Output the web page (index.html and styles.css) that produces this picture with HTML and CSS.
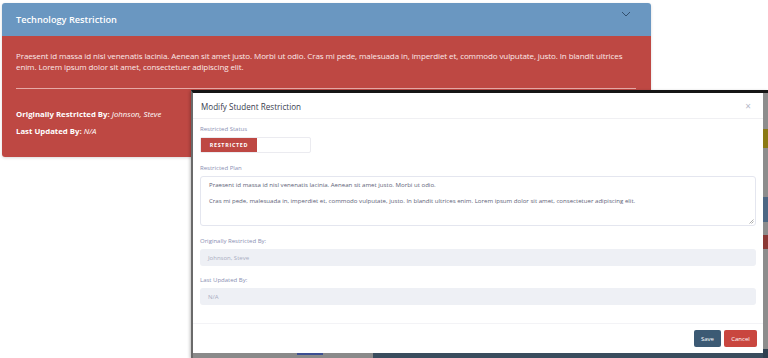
FILE: index.html
```html
<!DOCTYPE html>
<html lang="en">
<head>
<meta charset="UTF-8">
<meta name="viewport" content="width=device-width, initial-scale=1.0">
<title>Technology Restriction</title>
<link rel="stylesheet" href="styles.css">
</head>
<body>
<div class="card">
    <div class="card-header">
        <span>Technology Restriction</span>
        <svg class="chevron" width="10" height="6" viewBox="0 0 10 6"><path d="M1 1 L5 5 L9 1" fill="none" stroke="#33506e" stroke-width="1"/></svg>
    </div>
    <div class="card-body">
        <p class="plan">Praesent id massa id nisl venenatis lacinia. Aenean sit amet justo. Morbi ut odio. Cras mi pede, malesuada in, imperdiet et, commodo vulputate, justo. In blandit ultrices enim. Lorem ipsum dolor sit amet, consectetuer adipiscing elit.</p>
        <hr>
        <p class="meta"><b>Originally Restricted By:</b> <i>Johnson, Steve</i></p>
        <p class="meta"><b>Last Updated By:</b> <i>N/A</i></p>
    </div>
</div>

<!-- captura do modal por cima do cartão -->
<div class="shot">
    <div class="modal">
        <div class="modal-header">
            <span>Modify Student Restriction</span>
            <span class="close">&times;</span>
        </div>
        <div class="modal-body">
            <label>Restricted Status</label>
            <div class="toggle">
                <span class="on">RESTRICTED</span>
                <span class="off"></span>
            </div>
            <label>Restricted Plan</label>
            <div class="textarea">
                <p>Praesent id massa id nisl venenatis lacinia. Aenean sit amet justo. Morbi ut odio.</p>
                <p>Cras mi pede, malesuada in, imperdiet et, commodo vulputate, justo. In blandit ultrices enim. Lorem ipsum dolor sit amet, consectetuer adipiscing elit.</p>
                <svg class="grip" width="5" height="5" viewBox="0 0 5 5"><path d="M4.5 0.5 L0.5 4.5 M4.5 2.5 L2.5 4.5" stroke="#999" stroke-width="0.8"/></svg>
            </div>
            <label>Originally Restricted By:</label>
            <div class="input">Johnson, Steve</div>
            <label>Last Updated By:</label>
            <div class="input">N/A</div>
        </div>
        <div class="modal-footer">
            <button class="btn save">Save</button>
            <button class="btn cancel">Cancel</button>
        </div>
    </div>
    <div class="side">
        <div class="s-gray" style="height:36px"></div>
        <div class="s-olive" style="height:19px"></div>
        <div class="s-gray" style="height:49px"></div>
        <div class="s-blue" style="height:25px"></div>
        <div class="s-gray" style="height:13px"></div>
        <div class="s-red" style="height:14px"></div>
        <div class="s-gray" style="height:100px"></div>
        <div class="s-slate" style="height:10px"></div>
    </div>
    <div class="bottom">
        <div class="b-gray"><span class="b-blue"></span></div>
        <div class="b-slate"></div>
    </div>
</div>
</body>
</html>
```

FILE: styles.css
```css
body {
    font-family: "Open Sans", "Noto Sans", sans-serif;
    margin: 0;
    padding: 3px 0 0 2px;
    background-color: #fff;
    width: 768px;
    height: 358px;
    box-sizing: border-box;
    overflow: hidden;
    position: relative;
}

/* Cartão */
.card {
    width: 649px;
    border-radius: 3px;
    overflow: hidden;
    box-shadow: 0 1px 3px rgba(0, 0, 0, 0.15);
}

.card-header {
    height: 33px;
    background-color: #6a97c1;
    color: #fff;
    font-size: 9.2px;
    font-weight: 600;
    display: flex;
    align-items: center;
    justify-content: space-between;
    padding: 0 20px 0 14px;
    box-sizing: border-box;
}

.chevron {
    margin-top: -11px;
}

.card-body {
    background-color: #be4843;
    color: #fff;
    padding: 14px 15px 14px 14px;
    height: 121px;
    box-sizing: border-box;
}

.plan {
    margin: 0;
    font-size: 8px;
    letter-spacing: -0.1px;
    line-height: 11px;
    color: #fbe9e8;
}

.card-body hr {
    border: none;
    border-top: 1px solid #e7a9a6;
    margin: 16px 0 20px 0;
}

.meta {
    margin: 0 0 6px 0;
    font-size: 7.8px;
    line-height: 11px;
}

.meta b {
    font-weight: 700;
}

.meta i {
    font-weight: 400;
}

/* Captura do modal */
.shot {
    position: absolute;
    left: 191px;
    top: 90px;
    width: 577px;
    height: 268px;
    border-top: 3px solid #151515;
    border-left: 2px solid #6a6a6a;
    box-sizing: border-box;
    display: grid;
    grid-template-columns: 570px 5px;
    grid-template-rows: 260px 5px;
    background-color: #8a8a8a;
    box-shadow: -1px 1px 3px rgba(0, 0, 0, 0.25);
}

.modal {
    grid-column: 1;
    grid-row: 1;
    background-color: #fff;
    display: flex;
    flex-direction: column;
    font-size: 6.3px;
    overflow: hidden;
}

.modal-header {
    height: 26px;
    flex: none;
    border-bottom: 1px solid #f0f0f3;
    display: flex;
    align-items: center;
    justify-content: space-between;
    padding: 1px 12px 0 8px;
    color: #3a3d4f;
    font-size: 8.1px;
    box-sizing: border-box;
}

.close {
    color: #b5b8c8;
    font-size: 10px;
}

.modal-body {
    padding: 6px 7px 0 7px;
    flex: 1;
}

.modal-body label {
    display: block;
    color: #8a8fb3;
    font-size: 6px;
    line-height: 9px;
    margin-bottom: 3px;
}

.toggle {
    width: 111px;
    height: 16px;
    border: 1px solid #ebebf0;
    border-radius: 2px;
    display: flex;
    box-sizing: border-box;
    margin: 1px 0 11px 0;
}

.toggle .on {
    width: 56px;
    background-color: #be4843;
    color: #fff;
    font-weight: 700;
    font-size: 5.4px;
    letter-spacing: 0.7px;
    display: flex;
    align-items: center;
    justify-content: center;
}

.textarea {
    position: relative;
    height: 50px;
    border: 1px solid #e4e6ef;
    border-radius: 3px;
    padding: 4px 8px;
    box-sizing: border-box;
    color: #5e6278;
    font-size: 6.1px;
    line-height: 8px;
    margin-bottom: 11px;
}

.textarea p {
    margin: 0 0 8px 0;
}

.grip {
    position: absolute;
    right: 1px;
    bottom: 1px;
}

.input {
    height: 17px;
    background-color: #eef0f5;
    border-radius: 3px;
    color: #a9adc2;
    font-size: 6px;
    padding: 0 8px;
    display: flex;
    align-items: center;
    margin-bottom: 10px;
}

.modal-footer {
    height: 30px;
    flex: none;
    border-top: 1px solid #f3f3f6;
    display: flex;
    justify-content: flex-end;
    align-items: center;
    gap: 3px;
    padding: 0 6px 0 0;
    box-sizing: border-box;
}

.btn {
    height: 17px;
    border: none;
    border-radius: 2px;
    color: #fff;
    font-family: inherit;
    font-size: 6px;
    padding: 0;
    cursor: pointer;
}

.save {
    width: 27px;
    background-color: #3c5a74;
}

.cancel {
    width: 33px;
    background-color: #c9463f;
}

/* fundo escurecido atrás do modal */
.side {
    grid-column: 2;
    grid-row: 1 / 3;
    display: flex;
    flex-direction: column;
}

.s-gray { background-color: #8d8d8d; }
.s-olive { background-color: #8a7914; }
.s-blue { background-color: #4d6784; }
.s-red { background-color: #8b3835; }
.s-slate { background-color: #2f4050; flex: 1; }

.bottom {
    grid-column: 1;
    grid-row: 2;
    display: flex;
}

.b-gray {
    width: 180px;
    background-color: #8a8a8a;
    position: relative;
}

.b-blue {
    position: absolute;
    left: 104px;
    top: 0;
    width: 26px;
    height: 2px;
    background-color: #3c4f92;
}

.b-slate {
    flex: 1;
    background-color: #3a4d5e;
}
```
